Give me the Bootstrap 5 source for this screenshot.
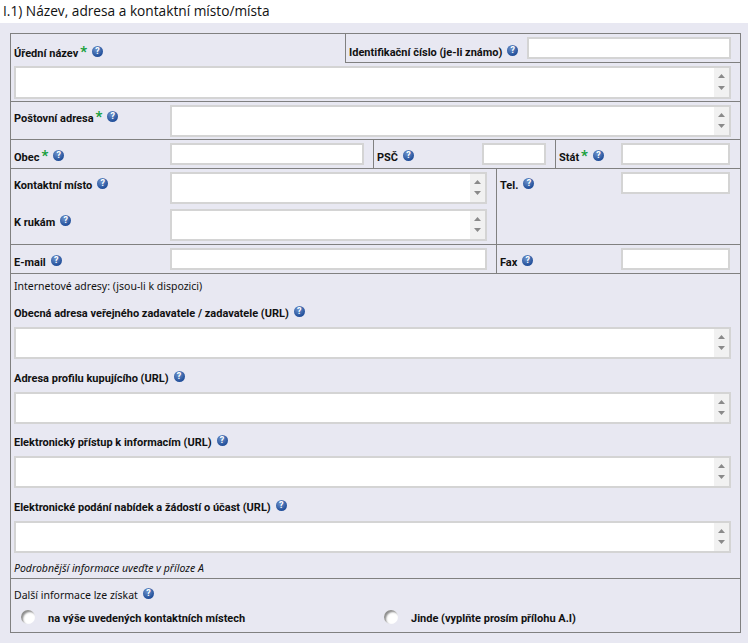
<!DOCTYPE html>
<html lang="cs">
<head>
    <meta charset="UTF-8">
    <meta name="viewport" content="width=device-width, initial-scale=1.0">
    <title>Název, adresa a kontaktní místo</title>
    <link href="https://cdn.jsdelivr.net/npm/bootstrap@5.3.0/dist/css/bootstrap.min.css" rel="stylesheet">
    <style>
        body {
            background: #fff;
            color: #111;
            font-family: "Noto Sans", "DejaVu Sans", sans-serif;
            font-size: 10.5px;
            line-height: 14px;
        }
        .sec-title {
            height: 23px;
            margin: 0;
            padding: 1px 0 0 3px;
            font-family: "Open Sans", sans-serif;
            font-size: 13.7px;
            line-height: 20px;
            font-weight: 400;
        }
        .form-panel { background: #e8e8f2; padding: 10px 7px 10px 10px; }
        .form-box { border: 1px solid #808080; width: 731px; }
        .line-b { border-bottom: 1px solid #808080; }
        .line-r { border-right: 1px solid #808080; }
        .line-l { border-left: 1px solid #808080; }

        .fld-label { font-family: "Roboto", sans-serif; font-size: 11px; font-weight: 700; white-space: nowrap; }
        .req { color: #17a03c; font-size: 15px; font-weight: 700; line-height: 10px; position: relative; top: 0; margin-left: 2px; }
        .help-dot {
            display: inline-block;
            width: 11px;
            height: 11px;
            margin-left: 5px;
            border-radius: 50%;
            background: radial-gradient(circle at 40% 30%, #6f94cc, #23509b 70%);
            color: #fff;
            font-family: "Roboto", sans-serif;
            font-size: 9px;
            line-height: 11px;
            font-weight: 700;
            text-align: center;
            vertical-align: 3px;
        }

        .txt-input {
            display: block;
            height: 22px;
            padding: 0 3px;
            background: #fff;
            border: 2px solid #d4d4d4;
            border-radius: 0;
            outline: none;
            flex: none;
        }
        .ta-wrap { display: flex; background: #fff; border: 2px solid #d4d4d4; flex: none; }
        .ta-wrap textarea { flex: 1; min-width: 0; border: 0; padding: 0; resize: none; outline: none; background: #fff; }
        .ta-bar { width: 15px; flex: none; background: #f1f1f1; display: flex; flex-direction: column; justify-content: space-between; align-items: center; padding: 6px 0 7px; }
        .ta-bar svg { display: block; }

        .row-one { height: 29px; }
        .row-ta { height: 39px; padding: 3px 0 0 3px; }
        .row-post { height: 38px; padding-top: 3px; }
        .row-city { height: 29px; }
        .row-contact { height: 76px; }
        .row-mail { height: 29px; }
        .row-urls { height: 305px; padding: 5px 0 0 3px; }
        .row-more { height: 53px; padding: 9px 0 0 3px; }

        .cell-id { width: 395px; margin-left: auto; padding: 3px 0 0 3px; }
        .lab-first { padding: 12px 0 0 3px; }
        .lab-id { padding-top: 8px; }
        .lab-main { width: 159px; flex: none; padding: 10px 0 0 3px; }
        .lab-top { padding-top: 6px; }
        .lab-side { flex: none; padding: 10px 0 0 3px; }
        .lab-tel { padding-top: 9px; }
        .w-city { width: 363px; }
        .w-psc { width: 182px; }
        .w-left { width: 486px; }
        .gap-top { padding-top: 3px; }

        .i-id { width: 204px; margin-left: auto; margin-right: 9px; }
        .i-city { width: 194px; margin-top: 3px; }
        .i-psc { width: 64px; margin: 3px 9px 0 auto; }
        .i-small { width: 109px; margin: 3px 10px 0 auto; }
        .i-mail { width: 317px; margin-top: 3px; }
        .ta-one { width: 717px; height: 33px; }
        .ta-post { width: 561px; height: 32px; }
        .ta-half { width: 317px; height: 32px; }
        .ta-url { width: 717px; height: 32px; }

        .stack-two { height: 37px; }
        .url-label { height: 14px; margin: 12px 0 7px; }
        .url-first { margin-top: 13px; }
        .url-short { margin-top: 11px; }
        .note-row { margin-top: 8px; font-style: italic; }
        .radio-dot {
            width: 14px;
            height: 14px;
            margin: 0;
            flex: none;
            background: #fff;
            border: 0;
            border-radius: 50%;
            box-shadow: inset 2px 2px 2px #8e8e8e;
            appearance: none;
        }
        .radio-row { margin-top: 8px; }
        .radio-item { display: flex; align-items: flex-start; }
        .radio-a { width: 370px; padding-left: 7px; }
        .radio-item label { margin: 2px 0 0 13px; }
    </style>
</head>
<body>
    <h1 class="sec-title">I.1) Název, adresa a kontaktní místo/místa</h1>
    <div class="form-panel">
        <div class="form-box">
            <div class="d-flex row-one">
                <div class="lab-first"><span class="fld-label">Úřední název<span class="req">*</span><span class="help-dot">?</span></span></div>
                <div class="cell-id d-flex line-l line-b">
                    <div class="lab-id"><span class="fld-label">Identifikační číslo (je-li známo)<span class="help-dot">?</span></span></div>
                    <input class="txt-input i-id" type="text">
                </div>
            </div>
            <div class="row-ta line-b">
                <div class="ta-wrap ta-one"><textarea></textarea><div class="ta-bar"><svg width="7" height="4"><path d="M3.5 0L7 4H0z" fill="#8a8a8a"/></svg><svg width="7" height="4"><path d="M0 0H7L3.5 4z" fill="#8a8a8a"/></svg></div></div>
            </div>
            <div class="d-flex row-post line-b">
                <div class="lab-main lab-top"><span class="fld-label">Poštovní adresa<span class="req">*</span><span class="help-dot">?</span></span></div>
                <div class="ta-wrap ta-post"><textarea></textarea><div class="ta-bar"><svg width="7" height="4"><path d="M3.5 0L7 4H0z" fill="#8a8a8a"/></svg><svg width="7" height="4"><path d="M0 0H7L3.5 4z" fill="#8a8a8a"/></svg></div></div>
            </div>
            <div class="d-flex row-city line-b">
                <div class="d-flex w-city line-r">
                    <div class="lab-main"><span class="fld-label">Obec<span class="req">*</span><span class="help-dot">?</span></span></div>
                    <input class="txt-input i-city" type="text">
                </div>
                <div class="d-flex w-psc line-r">
                    <div class="lab-side"><span class="fld-label">PSČ<span class="help-dot">?</span></span></div>
                    <input class="txt-input i-psc" type="text">
                </div>
                <div class="d-flex flex-grow-1">
                    <div class="lab-side"><span class="fld-label">Stát<span class="req">*</span><span class="help-dot">?</span></span></div>
                    <input class="txt-input i-small" type="text">
                </div>
            </div>
            <div class="d-flex row-contact line-b">
                <div class="w-left line-r gap-top">
                    <div class="d-flex stack-two">
                        <div class="lab-main lab-top"><span class="fld-label">Kontaktní místo<span class="help-dot">?</span></span></div>
                        <div class="ta-wrap ta-half"><textarea></textarea><div class="ta-bar"><svg width="7" height="4"><path d="M3.5 0L7 4H0z" fill="#8a8a8a"/></svg><svg width="7" height="4"><path d="M0 0H7L3.5 4z" fill="#8a8a8a"/></svg></div></div>
                    </div>
                    <div class="d-flex stack-two">
                        <div class="lab-main lab-top"><span class="fld-label">K rukám<span class="help-dot">?</span></span></div>
                        <div class="ta-wrap ta-half"><textarea></textarea><div class="ta-bar"><svg width="7" height="4"><path d="M3.5 0L7 4H0z" fill="#8a8a8a"/></svg><svg width="7" height="4"><path d="M0 0H7L3.5 4z" fill="#8a8a8a"/></svg></div></div>
                    </div>
                </div>
                <div class="d-flex flex-grow-1 align-items-start">
                    <div class="lab-side lab-tel"><span class="fld-label">Tel.<span class="help-dot">?</span></span></div>
                    <input class="txt-input i-small" type="text">
                </div>
            </div>
            <div class="d-flex row-mail line-b">
                <div class="d-flex w-left line-r">
                    <div class="lab-main"><span class="fld-label">E-mail<span class="help-dot">?</span></span></div>
                    <input class="txt-input i-mail" type="text">
                </div>
                <div class="d-flex flex-grow-1">
                    <div class="lab-side"><span class="fld-label">Fax<span class="help-dot">?</span></span></div>
                    <input class="txt-input i-small" type="text">
                </div>
            </div>
            <div class="row-urls line-b">
                <div>Internetové adresy: (jsou-li k dispozici)</div>
                <div class="url-label url-first"><span class="fld-label">Obecná adresa veřejného zadavatele / zadavatele (URL)<span class="help-dot">?</span></span></div>
                <div class="ta-wrap ta-url"><textarea></textarea><div class="ta-bar"><svg width="7" height="4"><path d="M3.5 0L7 4H0z" fill="#8a8a8a"/></svg><svg width="7" height="4"><path d="M0 0H7L3.5 4z" fill="#8a8a8a"/></svg></div></div>
                <div class="url-label"><span class="fld-label">Adresa profilu kupujícího (URL)<span class="help-dot">?</span></span></div>
                <div class="ta-wrap ta-url"><textarea></textarea><div class="ta-bar"><svg width="7" height="4"><path d="M3.5 0L7 4H0z" fill="#8a8a8a"/></svg><svg width="7" height="4"><path d="M0 0H7L3.5 4z" fill="#8a8a8a"/></svg></div></div>
                <div class="url-label url-short"><span class="fld-label">Elektronický přístup k informacím (URL)<span class="help-dot">?</span></span></div>
                <div class="ta-wrap ta-url"><textarea></textarea><div class="ta-bar"><svg width="7" height="4"><path d="M3.5 0L7 4H0z" fill="#8a8a8a"/></svg><svg width="7" height="4"><path d="M0 0H7L3.5 4z" fill="#8a8a8a"/></svg></div></div>
                <div class="url-label"><span class="fld-label">Elektronické podání nabídek a žádostí o účast (URL)<span class="help-dot">?</span></span></div>
                <div class="ta-wrap ta-url"><textarea></textarea><div class="ta-bar"><svg width="7" height="4"><path d="M3.5 0L7 4H0z" fill="#8a8a8a"/></svg><svg width="7" height="4"><path d="M0 0H7L3.5 4z" fill="#8a8a8a"/></svg></div></div>
                <div class="note-row">Podrobnější informace uveďte v příloze A</div>
            </div>
            <div class="row-more">
                <div>Další informace lze získat<span class="help-dot">?</span></div>
                <div class="d-flex radio-row">
                    <div class="radio-item radio-a"><input class="radio-dot" type="radio" name="more" id="more1"><label class="fld-label" for="more1">na výše uvedených kontaktních místech</label></div>
                    <div class="radio-item"><input class="radio-dot" type="radio" name="more" id="more2"><label class="fld-label" for="more2">Jinde (vyplňte prosím přílohu A.I)</label></div>
                </div>
            </div>
        </div>
    </div>
    <script src="https://cdn.jsdelivr.net/npm/bootstrap@5.3.0/dist/js/bootstrap.bundle.min.js"></script>
</body>
</html>
